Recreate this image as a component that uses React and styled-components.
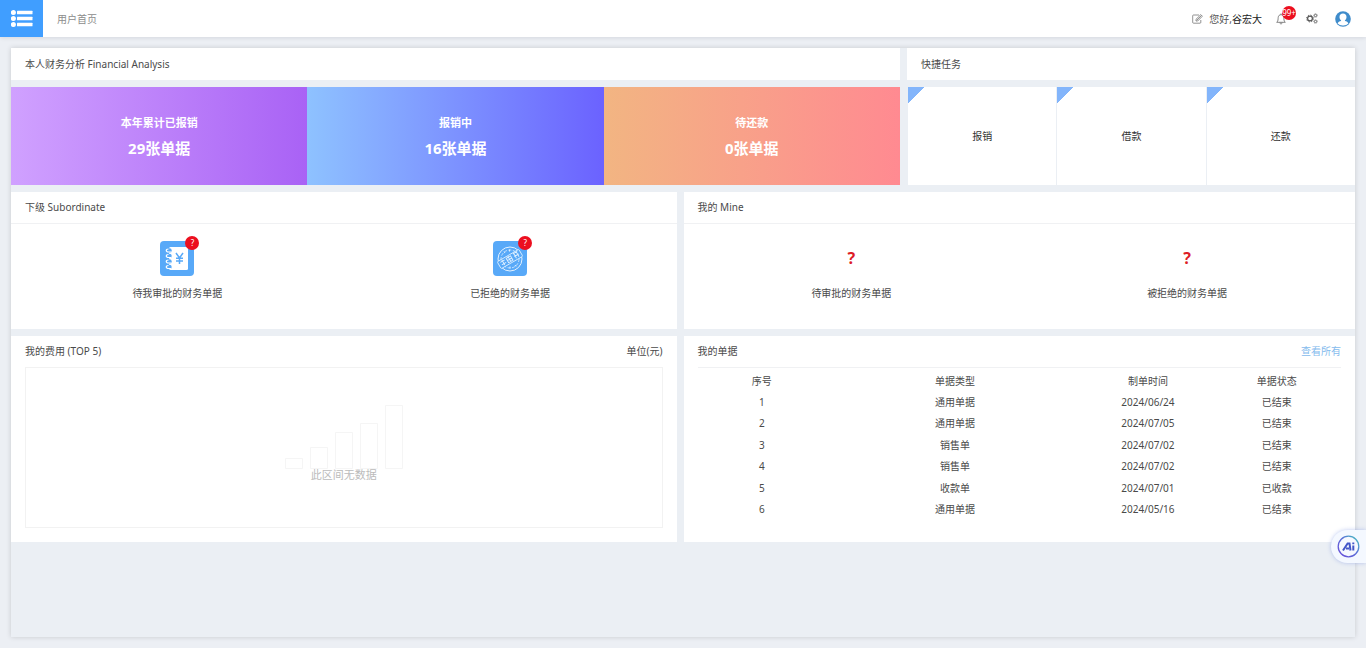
import React from "react";
import styled, { createGlobalStyle } from "styled-components";

const GlobalStyle = createGlobalStyle`
  * { box-sizing: border-box; }
  body {
    margin: 0;
    background: #eceff4;
    color: #4a4a4a;
    font: 10px/20px "Noto Sans", "Noto Sans CJK SC", sans-serif;
  }
  button, a { font: inherit; color: inherit; }
  button { border: 0; padding: 0; background: none; cursor: pointer; }
  a { text-decoration: none; }
  h2, p { margin: 0; font: inherit; }
`;

const Header = styled.header`
  display: flex;
  align-items: center;
  height: 37px;
  padding-right: 15px;
  background: #fff;
  box-shadow: 0 1px 4px rgba(0, 21, 41, 0.1);
`;
const MenuButton = styled.button`
  display: flex;
  align-items: center;
  justify-content: center;
  width: 43px;
  height: 37px;
  margin-right: 14px;
  background: #409eff;
`;
const PageName = styled.a`
  flex: 1;
  color: #8c8c8c;
`;
const Tools = styled.nav`
  display: flex;
  align-items: center;
`;
const Greeting = styled.button`
  display: flex;
  align-items: center;
  gap: 6px;
  margin-right: 14px;
  color: #555;
`;
const Person = styled.span`
  color: #222;
`;
const IconButton = styled.button`
  position: relative;
  display: flex;
  align-items: center;
  margin-right: ${(p) => p.$after || 0}px;
`;
const Count = styled.span`
  position: absolute;
  left: ${(p) => p.$left}px;
  top: ${(p) => p.$top}px;
  width: 14px;
  height: 14px;
  border-radius: 7px;
  background: #ec0f1f;
  color: #fff;
  font-size: 8px;
  line-height: 14px;
  text-align: center;
`;

const Main = styled.main`
  display: flex;
  flex-direction: column;
  gap: 7px;
  min-height: calc(100vh - 59px);
  margin: 11px;
  background: #ebeff4;
  box-shadow: 0 0 5px rgba(0, 0, 0, 0.16);
`;
const Columns = styled.div`
  display: grid;
  grid-template-columns: ${(p) => p.$columns};
  column-gap: 7px;
`;
const Stack = styled.section`
  display: flex;
  flex-direction: column;
  gap: 7px;
`;
const TitleBar = styled.h2`
  height: 32px;
  padding: 0 14px;
  line-height: 32px;
  background: #fff;
`;
const Stats = styled.div`
  display: grid;
  grid-template-columns: repeat(3, 1fr);
`;
const Stat = styled.div`
  height: 98px;
  padding-top: 26px;
  background: linear-gradient(to right, ${(p) => p.$from}, ${(p) => p.$to});
  color: #fff;
  font-size: 11px;
  font-weight: 700;
  text-align: center;
`;
const StatValue = styled.p`
  font-size: 15px;
  line-height: 30px;
`;
const Tasks = styled.div`
  display: grid;
  grid-template-columns: repeat(3, 1fr);
  gap: 1px;
  padding-left: 1px;
`;
const Task = styled.button`
  height: 98px;
  background: linear-gradient(135deg, #83b5fb 12px, #fff 12px);
  color: #333;
`;

const Card = styled.section`
  min-height: ${(p) => p.$height}px;
  padding: ${(p) => (p.$inset ? "0 14px 14px" : "0")};
  background: #fff;
`;
const CardHead = styled.div`
  display: flex;
  justify-content: space-between;
  height: ${(p) => (p.$line ? 32 : 31)}px;
  padding: ${(p) => (p.$inset ? "0" : "0 14px")};
  border-bottom: ${(p) => (p.$line ? "1px solid #f0f1f3" : "0")};
  line-height: 31px;
`;
const Entries = styled.div`
  display: grid;
  grid-template-columns: 1fr 1fr;
  padding-top: 17px;
`;
const Entry = styled.a`
  display: flex;
  flex-direction: column;
  align-items: center;
  gap: 7px;
`;
const EntryIcon = styled.span`
  position: relative;
  display: flex;
  width: 34px;
  height: 35px;
`;
const Unknown = styled.strong`
  height: 35px;
  line-height: 35px;
  color: #dd1d26;
  font-size: 16px;
`;
const Empty = styled.div`
  display: flex;
  flex-direction: column;
  align-items: center;
  height: 161px;
  padding-top: 37px;
  border: 1px solid #f2f2f2;
  color: #bbb;
  font-size: 11px;
  line-height: 12px;
`;
const ViewAll = styled.a`
  color: #85bbed;
`;
const Table = styled.table`
  width: 100%;
  height: 149px;
  margin-top: 3px;
  border-collapse: collapse;
  table-layout: fixed;
  text-align: center;
  line-height: 20px;

  th, td { padding: 0; font-weight: 400; }
`;
const Wide = styled.col`
  width: 40%;
`;
const Assistant = styled.button`
  position: fixed;
  right: 0;
  top: 530px;
  display: flex;
  align-items: center;
  width: 35px;
  height: 33px;
  padding-left: 6px;
  border-radius: 17px 0 0 17px;
  background: #f4f8ff;
  box-shadow: 0 0 4px rgba(90, 120, 220, 0.4);
`;

const ListIcon = () => (
  <svg width="22" height="17" viewBox="0 0 22 17" fill="#fff" aria-hidden="true">
    {[2.5, 8.5, 14.5].map((y) => (
      <g key={y}>
        <circle cx="2.4" cy={y} r="2.5" />
        <rect x="6" y={y - 1.7} width="15.500" height="3.4" rx="0.5" />
      </g>
    ))}
  </svg>
);
const EditIcon = () => (
  <svg width="11" height="10" viewBox="0 0 11 10" fill="none" stroke="#777" strokeWidth="0.8" aria-hidden="true">
    <path d="M7 1H1.500Q.7 1 .7 1.800v6.600Q.7 9.200 1.500 9.200h6.500Q8.800 9.200 8.800 8.400V6" />
    <path d="M4 7V5.300L8.800.6l1.600 1.600L5.700 7z" />
    <path d="M4.800 6.200L9.500 1.500" />
  </svg>
);
const BellIcon = () => (
  <svg width="10" height="12" viewBox="0 0 10 12" fill="none" stroke="#666" strokeWidth="0.8" aria-hidden="true">
    <path d="M5 .5v1M.7 9.3C2.3 8 2 6.300 2.200 4.500 2.400 2.600 3.500 1.700 5 1.700s2.600.9 2.800 2.800C8 6.300 7.700 8 9.300 9.300zM4 9.500c0 2 2 2 2 0" />
  </svg>
);
const CogsIcon = () => (
  <svg width="12" height="11" viewBox="0 0 12 11" fill="none" stroke="#555" aria-hidden="true">
    <circle cx="4" cy="5.500" r="2.400" strokeWidth="1.200" />
    <circle cx="4" cy="5.500" r="3.400" strokeWidth="1" strokeDasharray="1.300 1.370" />
    <circle cx="9.500" cy="2.500" r="1.200" strokeWidth=".8" />
    <circle cx="9.500" cy="2.500" r="1.900" strokeWidth=".5" strokeDasharray=".8 .8" />
    <circle cx="9.500" cy="8.500" r="1.200" strokeWidth=".8" />
    <circle cx="9.500" cy="8.500" r="1.900" strokeWidth=".5" strokeDasharray=".8 .8" />
  </svg>
);
const UserIcon = () => (
  <svg width="16" height="16" viewBox="0 0 16 16" aria-hidden="true">
    <circle cx="8" cy="8" r="7.800" fill="#3f8ccb" />
    <path d="M8 2.600c2.200 0 3.500 1.500 3.500 3.500 0 1.500-.7 2.700-1.600 3.400v.6c1.700.4 2.900 1 3.500 2.300A7 7 0 0 1 8 14.500a7 7 0 0 1-5.400-2.100c.6-1.300 1.800-1.900 3.500-2.300v-.6C5.200 8.800 4.500 7.600 4.500 6.100c0-2 1.300-3.500 3.500-3.500z" fill="#fff" />
  </svg>
);
const NotebookIcon = () => (
  <svg width="34" height="35" viewBox="0 0 34 35" aria-hidden="true">
    <rect width="34" height="35" rx="4" fill="#58a9f8" />
    <rect x="9" y="6" width="19" height="23" rx="1.500" fill="#fff" />
    {[10, 15.500, 21, 26.500].map((y) => (
      <g key={y} fill="none">
        <circle cx="9.500" cy={y - 0.5} r="2.200" fill="#58a9f8" />
        <path d={`M11 ${y + 1}H8.500C5.500 ${y + 1} 5.500 ${y - 2} 8.500 ${y - 2}`} stroke="#fff" strokeWidth="1.200" />
      </g>
    ))}
    <path d="M16 12l3.500 5 3.500-5M19.500 17V23M16 17.300h7M16 20h7" fill="none" stroke="#58a9f8" strokeWidth="1.500" />
  </svg>
);
const RejectedIcon = () => (
  <svg width="34" height="35" viewBox="0 0 34 35" fill="none" stroke="#e2f1ff" aria-hidden="true">
    <rect width="34" height="35" rx="4" fill="#58a9f8" stroke="none" />
    <circle cx="17" cy="18" r="12" strokeWidth="1" />
    <circle cx="17" cy="18" r="9" strokeWidth=".8" strokeDasharray="3 1.500" />
    <path d="M11 10.500l1 1.500M16.500 8.500v2M10 26l1.500-1M17 27.500v-2M23 25.500l-1-1.500" />
    <g transform="rotate(-30 17 18)">
      <rect x="4.500" y="14" width="25" height="8" rx="1" fill="#58a9f8" strokeWidth=".8" />
      <path d="M7 16h5M9.500 14.500v6M7 19h5M14 15.500h5v5h-5zM14 18h5M16.500 14.500v6M22 15h5M22 18h5M23 15v5.500M26 15v5.500" strokeWidth=".9" />
    </g>
  </svg>
);
const EmptyChart = () => (
  <svg width="118" height="64" viewBox="0 0 118 64" fill="none" stroke="#f5f5f5" aria-hidden="true">
    <path d="M.5 53.500h17v10H.5zM25.500 42.500h17v21h-17zM50.500 27.500h17v36h-17zM75.500 18.500h17v45h-17zM100.500.5h17v63h-17z" />
  </svg>
);
const AiIcon = () => (
  <svg width="23" height="23" viewBox="0 0 23 23" fill="none" aria-hidden="true">
    <defs>
      <linearGradient id="ring" x1="0" y1="1" x2="1" y2="0">
        <stop offset="0" stopColor="#6a4bd8" />
        <stop offset=".55" stopColor="#5b6fd8" />
        <stop offset="1" stopColor="#45c7bd" />
      </linearGradient>
    </defs>
    <circle cx="11.500" cy="11.500" r="10.300" stroke="url(#ring)" strokeWidth="1.300" fill="#f6f9ff" />
    <path d="M6 15.500l4.600-7h1.900l1 7M9 13.500h3" stroke="#4356c8" strokeWidth="2" />
    <path d="M16.300 10.500v5M16.300 7.500v1.700" stroke="#4356c8" strokeWidth="2" />
  </svg>
);

const stats = [
  ["本年累计已报销", "29张单据", "#d0a1ff", "#a962f5"],
  ["报销中", "16张单据", "#8ec2ff", "#6b62ff"],
  ["待还款", "0张单据", "#f2b582", "#ff8a91"],
];
const documents = [
  ["通用单据", "2024/06/24", "已结束"],
  ["通用单据", "2024/07/05", "已结束"],
  ["销售单", "2024/07/02", "已结束"],
  ["销售单", "2024/07/02", "已结束"],
  ["收款单", "2024/07/01", "已收款"],
  ["通用单据", "2024/05/16", "已结束"],
];

export default function App() {
  return (
    <>
      <GlobalStyle />
      <Header>
        <MenuButton aria-label="菜单"><ListIcon /></MenuButton>
        <PageName href="#">用户首页</PageName>
        <Tools>
          <Greeting><EditIcon /><span>您好,<Person>谷宏大</Person></span></Greeting>
          <IconButton $after={20} aria-label="通知"><BellIcon /><Count $left={6} $top={-7}>99+</Count></IconButton>
          <IconButton $after={17} aria-label="设置"><CogsIcon /></IconButton>
          <IconButton aria-label="账户"><UserIcon /></IconButton>
        </Tools>
      </Header>
      <Main>
        <Columns $columns="889fr 448fr">
          <Stack>
            <TitleBar>本人财务分析 Financial Analysis</TitleBar>
            <Stats>
              {stats.map(([label, value, from, to]) => (
                <Stat key={label} $from={from} $to={to}>
                  <p>{label}</p>
                  <StatValue>{value}</StatValue>
                </Stat>
              ))}
            </Stats>
          </Stack>
          <Stack>
            <TitleBar>快捷任务</TitleBar>
            <Tasks>
              {["报销", "借款", "还款"].map((name) => <Task key={name}>{name}</Task>)}
            </Tasks>
          </Stack>
        </Columns>
        <Columns $columns="666fr 672fr">
          <Card $height={137}>
            <CardHead $line><h2>下级 Subordinate</h2></CardHead>
            <Entries>
              <Entry href="#">
                <EntryIcon><NotebookIcon /><Count $left={25} $top={-5}>?</Count></EntryIcon>
                <span>待我审批的财务单据</span>
              </Entry>
              <Entry href="#">
                <EntryIcon><RejectedIcon /><Count $left={25} $top={-5}>?</Count></EntryIcon>
                <span>已拒绝的财务单据</span>
              </Entry>
            </Entries>
          </Card>
          <Card $height={137}>
            <CardHead $line><h2>我的 Mine</h2></CardHead>
            <Entries>
              <Entry href="#"><Unknown>?</Unknown><span>待审批的财务单据</span></Entry>
              <Entry href="#"><Unknown>?</Unknown><span>被拒绝的财务单据</span></Entry>
            </Entries>
          </Card>
        </Columns>
        <Columns $columns="666fr 672fr">
          <Card $inset $height={206}>
            <CardHead $inset><h2>我的费用 (TOP 5)</h2><span>单位(元)</span></CardHead>
            <Empty><EmptyChart /><p>此区间无数据</p></Empty>
          </Card>
          <Card $inset $height={206}>
            <CardHead $inset $line><h2>我的单据</h2><ViewAll href="#">查看所有</ViewAll></CardHead>
            <Table>
              <colgroup><col /><Wide /><col /><col /></colgroup>
              <thead>
                <tr><th>序号</th><th>单据类型</th><th>制单时间</th><th>单据状态</th></tr>
              </thead>
              <tbody>
                {documents.map(([type, date, state], i) => (
                  <tr key={i}><td>{i + 1}</td><td>{type}</td><td>{date}</td><td>{state}</td></tr>
                ))}
              </tbody>
            </Table>
          </Card>
        </Columns>
      </Main>
      <Assistant aria-label="AI"><AiIcon /></Assistant>
    </>
  );
}
